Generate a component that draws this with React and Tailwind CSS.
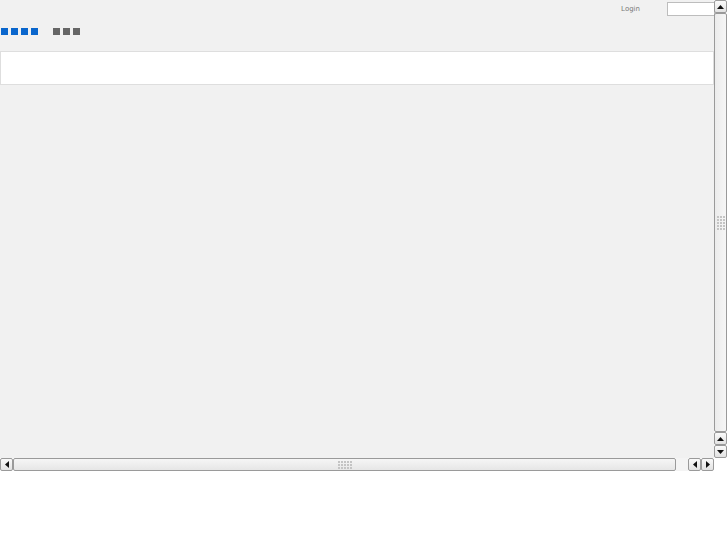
const Up = () => (
  <svg width="7" height="4" viewBox="0 0 7 4"><path d="M3.5 0L7 4H0z" fill="#111" /></svg>
);
const Down = () => (
  <svg width="7" height="4" viewBox="0 0 7 4"><path d="M0 0h7L3.5 4z" fill="#111" /></svg>
);
const Left = () => (
  <svg width="4" height="7" viewBox="0 0 4 7"><path d="M4 0v7L0 3.5z" fill="#111" /></svg>
);
const Right = () => (
  <svg width="4" height="7" viewBox="0 0 4 7"><path d="M0 0l4 3.5L0 7z" fill="#111" /></svg>
);

const btn = "flex items-center justify-center border border-[#9a9a9a] rounded-[2px] bg-gradient-to-b from-[#fafafa] to-[#e2e2e2]";

const Grip = ({ cols, rows }) => (
  <div className="grid gap-[1px]" style={{ gridTemplateColumns: `repeat(${cols}, 2px)` }}>
    {Array.from({ length: cols * rows }).map((_, i) => (
      <div key={i} className="w-[2px] h-[2px] bg-[#c4c4c4]" />
    ))}
  </div>
);

export default function App() {
  return (
    <div className="w-[727px] h-[545px] bg-white font-['Liberation_Sans',sans-serif] flex flex-col">
      <div className="flex h-[458px]">
        <div className="w-[714px] bg-[#f1f1f1] flex flex-col">
          <div className="h-[17px] flex items-start justify-end">
            <span className="font-['DejaVu_Sans',sans-serif] text-[7px] leading-[8px] text-[#7a7a7a] mt-[5px] mr-[27px]">Login</span>
            <div className="w-[48px] h-[14px] mt-[2px] bg-white border border-[#bdbdbd] -mr-[1px]" />
          </div>
          <div className="flex items-center mt-[11px] ml-[1px] h-[7px]">
            <div className="flex gap-[3px]">
              <div className="w-[7px] h-[7px] bg-[#0a66cc]" />
              <div className="w-[7px] h-[7px] bg-[#0a66cc]" />
              <div className="w-[7px] h-[7px] bg-[#0a66cc]" />
              <div className="w-[7px] h-[7px] bg-[#0a66cc]" />
            </div>
            <div className="flex gap-[3px] ml-[15px]">
              <div className="w-[7px] h-[7px] bg-[#666]" />
              <div className="w-[7px] h-[7px] bg-[#666]" />
              <div className="w-[7px] h-[7px] bg-[#666]" />
            </div>
          </div>
          <div className="mt-[16px] h-[34px] bg-white border border-[#dedede]" />
        </div>
        <div className="w-[13px] flex flex-col">
          <div className={`${btn} h-[13px]`}><Up /></div>
          <div className="flex-1 border border-[#9a9a9a] rounded-[2px] bg-gradient-to-r from-[#ececec] to-[#f6f6f6] flex items-center justify-center">
            <Grip cols={3} rows={5} />
          </div>
          <div className={`${btn} h-[13px]`}><Up /></div>
          <div className={`${btn} h-[13px]`}><Down /></div>
        </div>
      </div>
      <div className="flex h-[13px]">
        <div className={`${btn} w-[13px]`}><Left /></div>
        <div className="w-[663px] border border-[#9a9a9a] rounded-[2px] bg-gradient-to-b from-[#f6f6f6] to-[#e6e6e6] flex items-center justify-center">
          <Grip cols={5} rows={3} />
        </div>
        <div className="w-[12px] bg-[#f4f4f4]" />
        <div className={`${btn} w-[13px]`}><Left /></div>
        <div className={`${btn} w-[13px]`}><Right /></div>
      </div>
    </div>
  );
}
